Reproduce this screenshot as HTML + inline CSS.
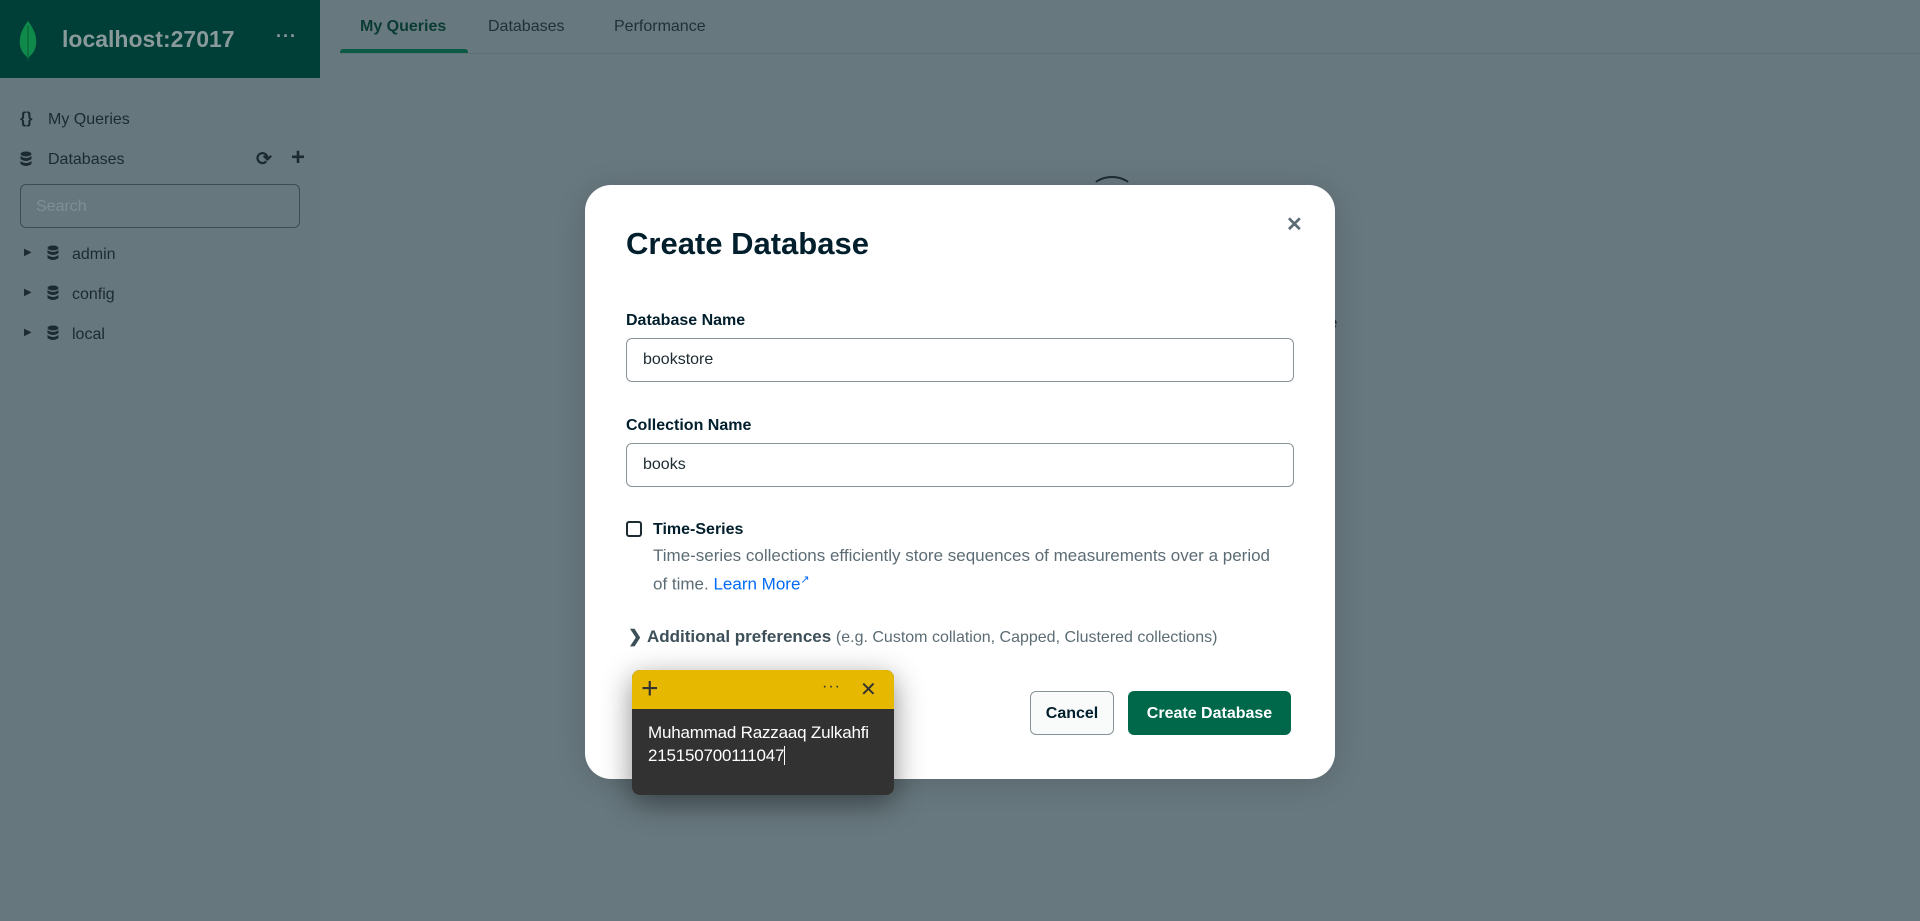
<!DOCTYPE html>
<html><head><meta charset="utf-8"><style>
*{box-sizing:border-box;margin:0;padding:0}
body{width:1920px;height:921px;overflow:hidden;background:#67787e;font-family:"Liberation Sans",sans-serif;position:relative}
.abs{position:absolute}
.hdr{left:0;top:0;width:320px;height:78px;background:#003e38}
.side{left:0;top:78px;width:320px;height:843px;background:#66777d}
.t{color:#1c2b31;font-size:16px}
.modal{left:585px;top:185px;width:750px;height:594px;background:#fff;border-radius:26px;box-shadow:0 4px 30px rgba(0,0,0,.15)}
.lbl{font-weight:bold;font-size:16px;color:#001e2b}
.inp{border:1px solid #889397;border-radius:6px;height:44px;width:668px;padding-left:16px;line-height:42px;font-size:16px;color:#1c2b31}
</style></head><body>
<div class="abs hdr">
 <svg class="abs" style="left:17px;top:20px" width="22" height="42" viewBox="0 0 22 42"><path d="M11 1 C4 10 2 18 3 25 C4 32 8 35 10 37 L11 41 L12 37 C14 35 18 32 19 25 C20 18 18 10 11 1Z" fill="#0f8a4a"/><path d="M11 6 V40" stroke="#0a5b33" stroke-width="1"/></svg>
 <div class="abs" style="left:62px;top:26px;font-size:23px;font-weight:bold;color:#8a9a9b">localhost:27017</div>
 <div class="abs" style="left:276px;top:26px;font-size:18px;color:#8a9a9b;letter-spacing:1px;font-weight:bold">···</div>
</div>
<div class="abs side"></div>
<div class="abs t" style="left:20px;top:110px;font-weight:bold">{}</div>
<div class="abs t" style="left:48px;top:111px">My Queries</div>
<svg class="abs" style="left:20px;top:151px" width="12" height="16" viewBox="0 0 12 16"><ellipse cx="6" cy="3" rx="5.5" ry="2.5" fill="#1c2b31"/><path d="M.5 5 Q6 9 11.5 5 V8 Q6 12 .5 8Z M.5 10 Q6 14 11.5 10 V13 Q6 17 .5 13Z" fill="#1c2b31"/></svg>
<div class="abs t" style="left:48px;top:151px">Databases</div>
<div class="abs t" style="left:256px;top:148px;font-size:19px;font-weight:bold">⟳</div>
<div class="abs t" style="left:291px;top:144px;font-size:24px;font-weight:bold">+</div>
<div class="abs" style="left:20px;top:184px;width:280px;height:44px;border:1px solid #3d4d52;border-radius:6px;padding-left:15px;line-height:44px;font-size:16px;color:#7f8f95">Search</div>
<div class="abs t" style="left:24px;top:247px;font-size:10px">▶</div>
<svg class="abs" style="left:47px;top:245px" width="12" height="16" viewBox="0 0 12 16"><ellipse cx="6" cy="3" rx="5.5" ry="2.5" fill="#1c2b31"/><path d="M.5 5 Q6 9 11.5 5 V8 Q6 12 .5 8Z M.5 10 Q6 14 11.5 10 V13 Q6 17 .5 13Z" fill="#1c2b31"/></svg>
<div class="abs t" style="left:72px;top:246px">admin</div>
<div class="abs t" style="left:24px;top:287px;font-size:10px">▶</div>
<svg class="abs" style="left:47px;top:285px" width="12" height="16" viewBox="0 0 12 16"><ellipse cx="6" cy="3" rx="5.5" ry="2.5" fill="#1c2b31"/><path d="M.5 5 Q6 9 11.5 5 V8 Q6 12 .5 8Z M.5 10 Q6 14 11.5 10 V13 Q6 17 .5 13Z" fill="#1c2b31"/></svg>
<div class="abs t" style="left:72px;top:286px">config</div>
<div class="abs t" style="left:24px;top:327px;font-size:10px">▶</div>
<svg class="abs" style="left:47px;top:325px" width="12" height="16" viewBox="0 0 12 16"><ellipse cx="6" cy="3" rx="5.5" ry="2.5" fill="#1c2b31"/><path d="M.5 5 Q6 9 11.5 5 V8 Q6 12 .5 8Z M.5 10 Q6 14 11.5 10 V13 Q6 17 .5 13Z" fill="#1c2b31"/></svg>
<div class="abs t" style="left:72px;top:326px">local</div>

<div class="abs" style="left:360px;top:18px;font-size:16px;font-weight:bold;color:#0a3b33">My Queries</div>
<div class="abs" style="left:488px;top:18px;font-size:16px;color:#203238">Databases</div>
<div class="abs" style="left:614px;top:18px;font-size:16px;color:#203238">Performance</div>
<div class="abs" style="left:340px;top:53px;width:1580px;height:1px;background:#5f7076"></div>
<div class="abs" style="left:340px;top:49px;width:128px;height:4px;background:#0b5a45;border-radius:3px 3px 0 0"></div>
<div class="abs" style="left:1090px;top:176px;width:44px;height:30px;border:2px solid #1c2b31;border-radius:50%;border-left-color:transparent;border-right-color:transparent;border-bottom-color:transparent"></div>
<div class="abs t" style="left:1328px;top:313px;font-size:17px">e</div>

<div class="abs modal"></div>
<div class="abs" style="left:626px;top:226px;font-size:31px;font-weight:bold;color:#001e2b">Create Database</div>
<div class="abs" style="left:1286px;top:212px;font-size:20px;font-weight:bold;color:#5c6c75">✕</div>
<div class="abs lbl" style="left:626px;top:312px">Database Name</div>
<div class="abs inp" style="left:626px;top:338px">bookstore</div>
<div class="abs lbl" style="left:626px;top:417px">Collection Name</div>
<div class="abs inp" style="left:626px;top:443px">books</div>
<div class="abs" style="left:626px;top:521px;width:16px;height:16px;border:2px solid #1c2b31;border-radius:3px"></div>
<div class="abs lbl" style="left:653px;top:521px">Time-Series</div>
<div class="abs" style="left:653px;top:543px;width:625px;font-size:17px;line-height:25px;color:#5c6c75">Time-series collections efficiently store sequences of measurements over a period of time. <span style="color:#016bf8">Learn More</span><sup style="color:#016bf8;font-size:11px">↗</sup></div>
<div class="abs" style="left:628px;top:627px;font-size:17px;font-weight:bold;color:#3d4f58">❯&nbsp;Additional preferences <span style="font-weight:normal;color:#5c6c75;font-size:16px">(e.g. Custom collation, Capped, Clustered collections)</span></div>
<div class="abs" style="left:1030px;top:691px;width:84px;height:44px;border:1px solid #889397;border-radius:6px;background:#f9fbfa;font-size:16px;font-weight:bold;color:#001e2b;text-align:center;line-height:44px">Cancel</div>
<div class="abs" style="left:1128px;top:691px;width:163px;height:44px;border-radius:6px;background:#00684a;font-size:16px;font-weight:bold;color:#fff;text-align:center;line-height:46px">Create Database</div>

<div class="abs" style="left:632px;top:670px;width:262px;height:125px;background:#323232;border-radius:8px;overflow:hidden;box-shadow:0 8px 30px rgba(0,0,0,.45)">
 <div style="height:39px;background:#e6b800;position:relative">
  <div class="abs" style="left:9px;top:3px;font-size:30px;font-weight:200;color:#333;line-height:32px">+</div>
  <div class="abs" style="left:190px;top:8px;font-size:16px;color:#333;letter-spacing:1px">···</div>
  <div class="abs" style="left:228px;top:8px;font-size:20px;color:#333;line-height:24px">✕</div>
 </div>
 <div style="padding:12px 16px;color:#fff;font-size:17px;line-height:23px;white-space:nowrap;letter-spacing:-0.2px">Muhammad Razzaaq Zulkahfi<br>215150700111047<span style="border-left:1px solid #fff"></span></div>
</div>
</body></html>
